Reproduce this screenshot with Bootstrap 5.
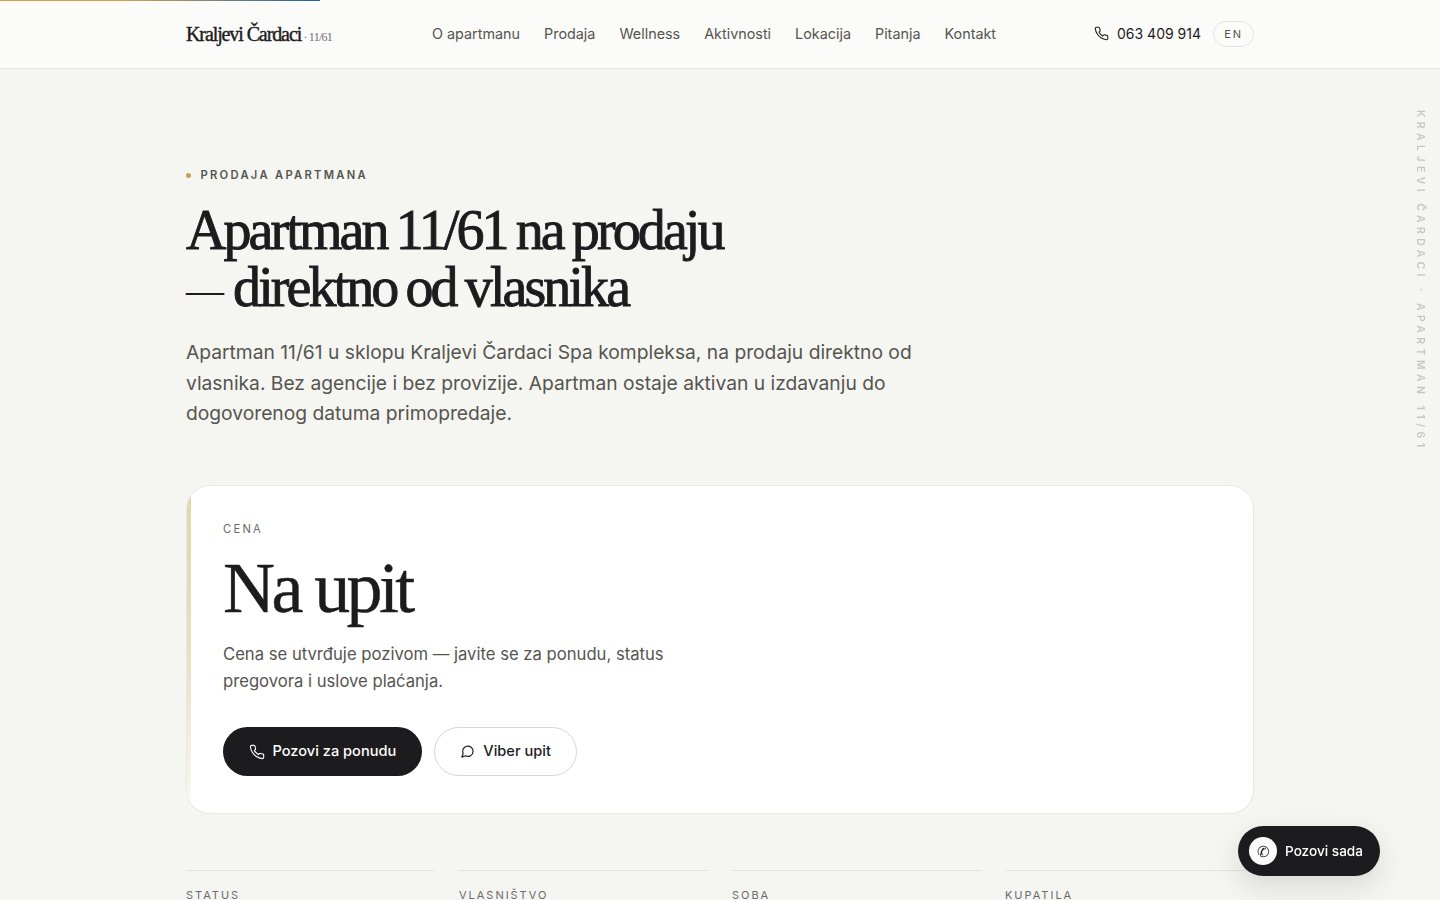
<!doctype html>
<html lang="sr">
<head>
<meta charset="utf-8">
<title>Kraljevi Čardaci 11/61</title>
<link href="https://cdn.jsdelivr.net/npm/bootstrap@5.3.0/dist/css/bootstrap.min.css" rel="stylesheet">
<style>
html,body{height:900px;overflow:hidden}
body{background:#f5f5f2;color:#1c1c1e;font-family:Inter,"Noto Sans",sans-serif}
.wrap-main{width:1068px;margin:0 auto}
.progress-line{position:fixed;top:0;left:0;width:320px;height:1px;background:linear-gradient(90deg,#c9a24b,#c9a24b 40%,#1f5fa8);z-index:5}
.top-head{height:69px;background:#fbfbf9;border-bottom:1px solid #e4e4e1}
.brand-name{font-family:"Liberation Serif",serif;font-size:20px;letter-spacing:-1.1px;color:#1c1c1e;-webkit-text-stroke:.4px #1c1c1e;text-decoration:none;line-height:1}
.brand-num{font-size:12px;color:#6f6f6f;-webkit-text-stroke:0;letter-spacing:-.75px}
.menu-row{margin-left:100px;gap:24px}
.menu-row a{font-size:14.36px;color:#55554f;text-decoration:none}
.phone-link{font-size:14px;color:#1c1c1e;text-decoration:none;gap:8px;padding-bottom:1px}
.lang-pill{width:41px;height:26px;border:1px solid #e4e4e1;border-radius:13px;font-size:11px;letter-spacing:.16em;color:#55554f;margin-left:12px}
.hero-box{padding-top:99px}
.eyebrow{font-size:11.2px;font-weight:600;letter-spacing:.205em;color:#55554f;line-height:14px;gap:9.5px}
.eyebrow i{width:5px;height:5px;border-radius:50%;background:#c9a24b;display:block}
.hero-title{font-family:"Liberation Serif",serif;font-size:56px;line-height:57px;font-weight:400;letter-spacing:-2.91px;word-spacing:-2px;-webkit-text-stroke:.9px #1c1c1e;margin:20px 0 0;padding-bottom:1px}
.hero-dash{font-size:38px;line-height:0;letter-spacing:0;vertical-align:3px;-webkit-text-stroke:0}
.hero-lead{font-size:19.24px;line-height:30.7px;color:#55554f;width:760px;margin:20px 0 0}
.price-card{margin-top:56px;height:329px;background:#fff;border:1px solid #e8e8e5;border-radius:24px;padding:36px;position:relative;overflow:hidden}
.price-card::before{content:"";position:absolute;left:0;top:0;bottom:0;width:4px;background:linear-gradient(180deg,#e4d5a8,#e9dfc0 50%,#fbfaf4)}
.price-label{font-size:11.2px;letter-spacing:.2em;color:#6b6b68;line-height:14px}
.price-value{font-family:"Liberation Serif",serif;font-size:72px;line-height:76px;letter-spacing:-3.6px;-webkit-text-stroke:.4px #1c1c1e;margin-top:14px}
.price-note{font-size:16.65px;line-height:27px;color:#55554f;width:480px;margin:15px 0 0}
.cta-row{margin-top:32px;gap:12px}
.cta-btn{height:49px;border-radius:25px;font-size:14.6px;font-weight:500;gap:8px;padding:0 25.5px;text-decoration:none}
.cta-dark{background:#1c1c1e;color:#fff}
.cta-light{background:#fff;color:#1c1c1e;border:1px solid #d6d6d3}
.fact-row{margin-top:56px;gap:24px}
.fact-cell{flex:1;border-top:1px solid #e2e2df;padding-top:17px;font-size:11px;letter-spacing:.18em;color:#6b6b68;line-height:14px}
.side-text{position:fixed;top:110px;right:13px;writing-mode:vertical-rl;font-size:10.4px;font-weight:600;letter-spacing:.43em;color:#c6c6c3;line-height:14px}
.float-call{position:fixed;left:1238px;top:826px;width:142px;height:50px;border-radius:25px;background:#1c1c1e;color:#fff;font-size:13.6px;font-weight:500;gap:8px;padding-left:11px;text-decoration:none;box-shadow:0 10px 30px rgba(0,0,0,.12)}
.float-icon{width:28px;height:28px;border-radius:50%;background:#fbfbf9;color:#1c1c1e;font-size:15px;line-height:1}
</style>
</head>
<body>
<div class="progress-line"></div>
<header class="top-head">
  <div class="wrap-main h-100 d-flex align-items-center">
    <a class="brand-name" href="#">Kraljevi Čardaci<span class="brand-num"> · 11/61</span></a>
    <nav class="menu-row d-flex">
      <a href="#">O apartmanu</a><a href="#">Prodaja</a><a href="#">Wellness</a><a href="#">Aktivnosti</a><a href="#">Lokacija</a><a href="#">Pitanja</a><a href="#">Kontakt</a>
    </nav>
    <div class="ms-auto d-flex align-items-center">
      <a class="phone-link d-flex align-items-center" href="#">
        <svg width="15" height="15" viewBox="0 0 24 24" fill="none" stroke="currentColor" stroke-width="1.7" stroke-linecap="round" stroke-linejoin="round"><path d="M22 16.9v3a2 2 0 0 1-2.2 2 19.8 19.8 0 0 1-8.6-3.1 19.5 19.5 0 0 1-6-6A19.8 19.8 0 0 1 2.1 4.2 2 2 0 0 1 4.1 2h3a2 2 0 0 1 2 1.7c.1 1 .4 1.9.7 2.8a2 2 0 0 1-.5 2.1L8.1 9.9a16 16 0 0 0 6 6l1.3-1.3a2 2 0 0 1 2.1-.4c.9.3 1.8.5 2.8.7a2 2 0 0 1 1.7 2z"/></svg>
        063 409 914
      </a>
      <span class="lang-pill d-flex align-items-center justify-content-center">EN</span>
    </div>
  </div>
</header>
<main class="wrap-main">
  <section class="hero-box">
    <div class="eyebrow d-flex align-items-center"><i></i>PRODAJA APARTMANA</div>
    <h1 class="hero-title">Apartman 11/61 na prodaju<br><span class="hero-dash">—</span> direktno od vlasnika</h1>
    <p class="hero-lead">Apartman 11/61 u sklopu Kraljevi Čardaci Spa kompleksa, na prodaju direktno od vlasnika. Bez agencije i bez provizije. Apartman ostaje aktivan u izdavanju do dogovorenog datuma primopredaje.</p>
  </section>
  <section class="price-card">
    <div class="price-label">CENA</div>
    <div class="price-value">Na upit</div>
    <p class="price-note">Cena se utvrđuje pozivom — javite se za ponudu, status pregovora i uslove plaćanja.</p>
    <div class="cta-row d-flex">
      <a class="cta-btn cta-dark d-flex align-items-center" href="#">
        <svg width="16" height="16" viewBox="0 0 24 24" fill="none" stroke="currentColor" stroke-width="1.7" stroke-linecap="round" stroke-linejoin="round"><path d="M22 16.9v3a2 2 0 0 1-2.2 2 19.8 19.8 0 0 1-8.6-3.1 19.5 19.5 0 0 1-6-6A19.8 19.8 0 0 1 2.1 4.2 2 2 0 0 1 4.1 2h3a2 2 0 0 1 2 1.7c.1 1 .4 1.9.7 2.8a2 2 0 0 1-.5 2.1L8.1 9.9a16 16 0 0 0 6 6l1.3-1.3a2 2 0 0 1 2.1-.4c.9.3 1.8.5 2.8.7a2 2 0 0 1 1.7 2z"/></svg>
        Pozovi za ponudu</a>
      <a class="cta-btn cta-light d-flex align-items-center" href="#">
        <svg width="15" height="15" viewBox="0 0 24 24" fill="none" stroke="currentColor" stroke-width="1.9" stroke-linecap="round" stroke-linejoin="round"><path d="M21 11.5a8.4 8.4 0 0 1-12.3 7.4L3 21l2-5.7A8.4 8.4 0 1 1 21 11.5z"/></svg>
        Viber upit</a>
    </div>
  </section>
  <section class="fact-row d-flex">
    <div class="fact-cell">STATUS</div><div class="fact-cell">VLASNIŠTVO</div><div class="fact-cell">SOBA</div><div class="fact-cell">KUPATILA</div>
  </section>
</main>
<div class="side-text">KRALJEVI ČARDACI · APARTMAN 11/61</div>
<a class="float-call d-flex align-items-center" href="#"><span class="float-icon d-flex align-items-center justify-content-center">✆</span>Pozovi sada</a>
<script src="https://cdn.jsdelivr.net/npm/bootstrap@5.3.0/dist/js/bootstrap.bundle.min.js"></script>
</body>
</html>
